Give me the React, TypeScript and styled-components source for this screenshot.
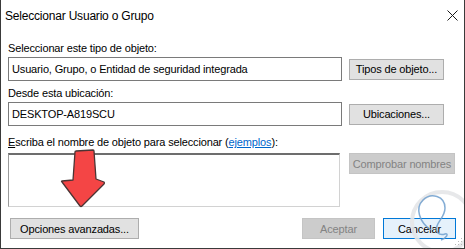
import React from "react";
import styled, { createGlobalStyle } from "styled-components";

const Global = createGlobalStyle`
  html, body { margin: 0; padding: 0; background: #ffffff; }
  body { font-family: "Liberation Sans", Arial, sans-serif; }
`;

const Window = styled.div`
  position: relative;
  width: 465px;
  height: 249px;
  box-sizing: border-box;
  background: #ffffff;
  border-left: 1px solid #3a3a3a;
  border-right: 1px solid #3a3a3a;
  border-bottom: 1px solid #3a3a3a;
  overflow: hidden;
  font-family: "Liberation Sans", Arial, sans-serif;
  font-size: 11px;
  letter-spacing: -0.15px;
  color: #000;
  display: flex;
  flex-direction: column;
`;

const TitleBar = styled.div`
  height: 30px;
  display: flex;
  align-items: center;
  justify-content: space-between;
  padding: 0 3px 0 4px;
  box-sizing: border-box;
`;

const Title = styled.span`
  font-size: 12px;
  letter-spacing: -0.2px;
  padding-top: 1px;
`;

const CloseBox = styled.div`
  width: 14px;
  height: 14px;
  display: flex;
  align-items: center;
  justify-content: center;
  margin-right: 2px;
`;

const Content = styled.div`
  display: flex;
  flex-direction: column;
  padding: 11px 8px 0 7px;
`;

const Label = styled.div<{ $mt?: number; $mb?: number }>`
  line-height: 15px;
  height: 15px;
  margin-top: ${(p) => p.$mt ?? 0}px;
  margin-bottom: ${(p) => p.$mb ?? 1}px;
  white-space: nowrap;
`;

const Underlined = styled.span`
  text-decoration: underline;
`;

const Link = styled.span`
  color: #0066cc;
  text-decoration: underline;
`;

const Row = styled.div<{ $btn: number; $align?: string }>`
  display: grid;
  grid-template-columns: 334px ${(p) => p.$btn}px;
  column-gap: 7px;
  align-items: ${(p) => p.$align ?? "center"};
`;

const TextBox = styled.div`
  height: 24px;
  box-sizing: border-box;
  border: 1px solid #7a7a7a;
  padding: 0 3px;
  display: flex;
  align-items: center;
  white-space: nowrap;
  overflow: hidden;
`;

const MultiBox = styled.div`
  height: 54px;
  box-sizing: border-box;
  border-top: 2px solid #6d6d6d;
  border-left: 1px solid #9a9a9a;
  border-right: 1px solid #d2d2d2;
  border-bottom: 1px solid #d2d2d2;
  width: 332px;
`;

const Button = styled.div<{ $variant?: "normal" | "disabled" | "default"; $w?: number }>`
  height: 21px;
  box-sizing: border-box;
  display: flex;
  align-items: center;
  justify-content: center;
  white-space: nowrap;
  ${(p) => (p.$w ? `width: ${p.$w}px;` : "")}
  background: ${(p) =>
    p.$variant === "disabled" ? "#cccccc" : p.$variant === "default" ? "#e5f1fb" : "#e1e1e1"};
  border: 1px solid
    ${(p) =>
      p.$variant === "disabled" ? "#c4c4c4" : p.$variant === "default" ? "#0078d7" : "#adadad"};
  color: ${(p) => (p.$variant === "disabled" ? "#838383" : "#000")};
`;

const Footer = styled.div`
  display: flex;
  align-items: center;
  margin-top: 11px;
  padding-left: 2px;
`;

const Spacer = styled.div`
  flex: 1;
`;

const FooterRight = styled.div`
  display: flex;
  gap: 8px;
`;

const Overlay = styled.svg`
  position: absolute;
  left: 0;
  top: 0;
  pointer-events: none;
`;

export default function App() {
  return (
    <>
      <Global />
      <Window>
        <TitleBar>
          <Title>Seleccionar Usuario o Grupo</Title>
          <CloseBox>
            <svg width="11" height="11" viewBox="0 0 11 11">
              <path d="M0.5 0.5 L10.5 10.5 M10.5 0.5 L0.5 10.5" stroke="#1a1a1a" strokeWidth="1" />
            </svg>
          </CloseBox>
        </TitleBar>
        <Content>
          <Label>Seleccionar este tipo de objeto:</Label>
          <Row $btn={95}>
            <TextBox>Usuario, Grupo, o Entidad de seguridad integrada</TextBox>
            <Button>Tipos de objeto...</Button>
          </Row>
          <Label $mt={5}>Desde esta ubicación:</Label>
          <Row $btn={95}>
            <TextBox>DESKTOP-A819SCU</TextBox>
            <Button>Ubicaciones...</Button>
          </Row>
          <Label $mt={9} $mb={3}>
            <Underlined>E</Underlined>scriba el nombre de objeto para seleccionar (<Link>ejemplos</Link>):
          </Label>
          <Row $btn={106} $align="start">
            <MultiBox />
            <Button $variant="disabled">Comprobar nombres</Button>
          </Row>
          <Footer>
            <Button $w={129}>Opciones avanzadas...</Button>
            <Spacer />
            <FooterRight>
              <Button $variant="disabled" $w={73}>Aceptar</Button>
              <Button $variant="default" $w={73}>Cancelar</Button>
            </FooterRight>
          </Footer>
        </Content>
        <Overlay width="465" height="249" viewBox="0 0 465 249">
          <path
            d="M74 152 Q74 151 75 151 L92 150 Q93 150 93 151 L95 179 L103 182 Q104 183 103 184 L81 206 Q80 207 79 206 L61 182 Q60 181 61 181 L72 180 Z"
            fill="#f44545"
            stroke="#4a3434"
            strokeWidth="1.3"
            strokeLinejoin="round"
          />
          <circle cx="441" cy="222" r="30" fill="none" stroke="#e4e6e8" strokeWidth="4" opacity="0.9" />
          <path
            d="M430 230 C418 222 414 208 422 200 C430 192 444 196 444 208 C444 216 438 220 436 226 C434 232 438 236 444 234 C448 233 446 238 440 240"
            fill="none"
            stroke="#6f9fce"
            strokeWidth="1.5"
            opacity="0.85"
          />
          <g fill="#b9b9b9">
            <rect x="460" y="238" width="1" height="1" />
            <rect x="457" y="241" width="1" height="1" />
            <rect x="460" y="241" width="1" height="1" />
            <rect x="454" y="244" width="1" height="1" />
            <rect x="457" y="244" width="1" height="1" />
            <rect x="460" y="244" width="1" height="1" />
          </g>
        </Overlay>
      </Window>
    </>
  );
}
